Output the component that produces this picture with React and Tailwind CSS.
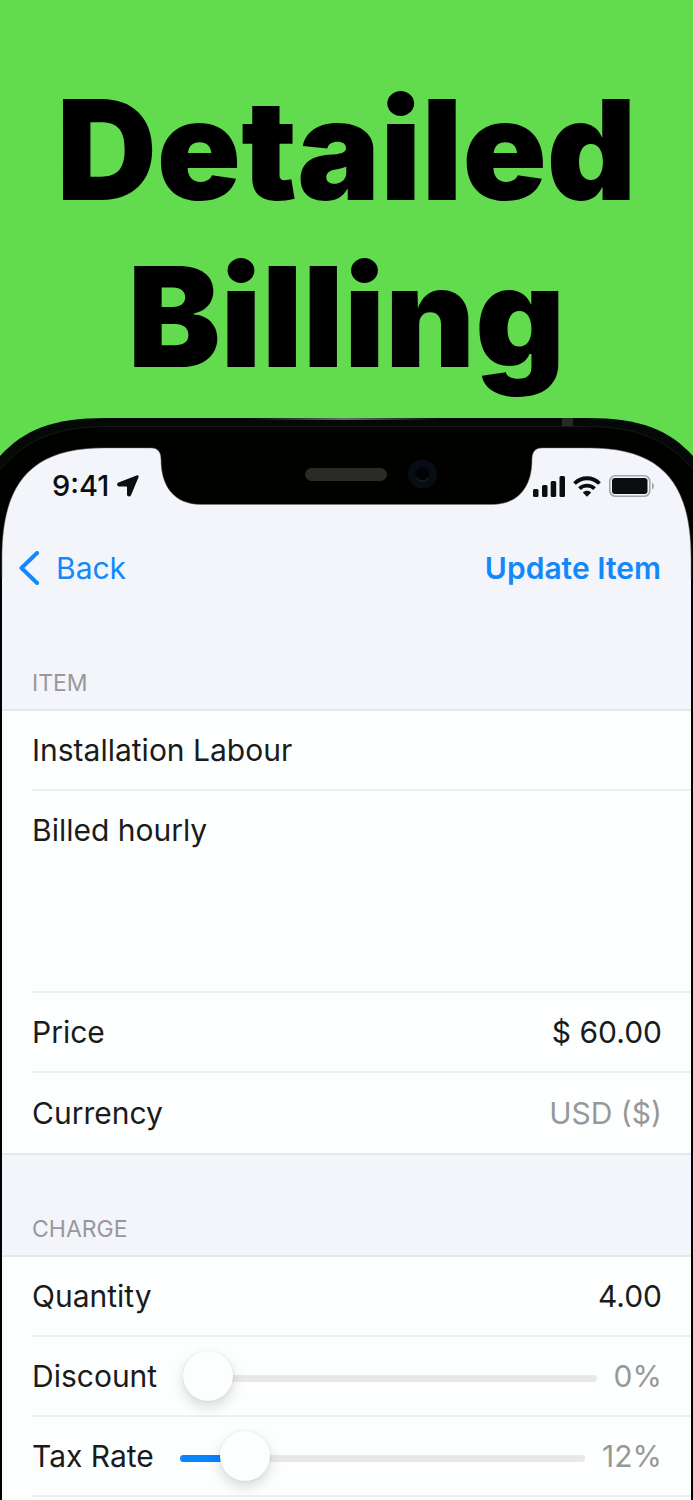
const fieldClass = 'min-w-0 bg-transparent p-0 outline-none';

function SectionHeader({ children }) {
  return <h2 className="px-[30px] pb-[10px] text-[23px] leading-8 text-[#98989c]">{children}</h2>;
}

function Row({ children, last = false }) {
  return (
    <div
      className={`ml-[30px] flex h-[80px] items-center pr-[29px] ${
        last ? '' : 'border-b-2 border-[#efeff1]'
      }`}
    >
      {children}
    </div>
  );
}

function PhoneTop() {
  return (
    <svg
      className="absolute inset-x-0 top-0 w-full"
      viewBox="0 0 693 160"
      fill="none"
      aria-hidden="true"
    >
      <path d="M0 160V38C24 12 52 0 106 0H587C641 0 669 12 693 38V160Z" fill="#040807" />
      <path d="M-2 170V54C24 22 56 8.500 106 8.500H587C637 8.500 669 22 695 54V170Z" fill="#010200" stroke="#151918" />
      <path d="M250 1H440" stroke="url(#shine)" strokeWidth="1.500" />
      <rect x="562" y="0" width="11" height="8" fill="#272927" />
      <path
        d="M2 170V140C2 64 32 30 104 30H151C158 30 161 34 161 42C161 68 174 86.500 201 86.500H492C519 86.500 532 68 532 42C532 34 535 30 542 30H589C661 30 691 64 691 140V170Z"
        fill="#f4f5fa"
        stroke="#777"
        strokeWidth="0.500"
      />
      <rect x="305" y="50" width="82" height="13" rx="6.500" fill="#2a2b29" />
      <circle cx="422.500" cy="56" r="14.500" fill="#080c15" />
      <circle cx="422.500" cy="56" r="7" fill="#020304" />
      <path d="M416.500 59.500A7 7 0 0 0 428.500 59.500" stroke="#1d232a" strokeWidth="1.200" />
      <defs>
        <linearGradient id="shine" x1="250" y1="0" x2="440" y2="0" gradientUnits="userSpaceOnUse">
          <stop stopColor="#040807" />
          <stop offset="0.500" stopColor="#8a8c8a" />
          <stop offset="1" stopColor="#040807" />
        </linearGradient>
      </defs>
    </svg>
  );
}

function StatusBar() {
  return (
    <div className="relative flex h-[38px] items-center justify-between pr-[38px] pl-[52px] text-[#0b0d0e]">
      <div className="flex items-center gap-2">
        <span className="text-[29px] leading-8 font-medium">9:41</span>
        <svg width="22" height="22" viewBox="0 0 22 22" fill="currentColor" aria-hidden="true">
          <path d="M19.500 0.400Q22.200 -0.200 21.500 2.200L14 20.200Q13 21.800 11.200 21.300Q10 20.900 10 19.400V12.200Q10 11.500 9.300 11.500H2Q0.200 11.400 0.100 9.600Q0 8.300 1.500 7.600Z" />
        </svg>
      </div>
      <div className="flex items-center gap-2">
        <svg width="33" height="21" viewBox="0 0 33 21" fill="currentColor" aria-hidden="true">
          <rect x="1" y="13" width="5.500" height="8" rx="1.500" />
          <rect x="10" y="9" width="5.500" height="12" rx="1.500" />
          <rect x="18.700" y="5" width="5.500" height="16" rx="1.500" />
          <rect x="27.500" y="0" width="5.500" height="21" rx="1.500" />
        </svg>
        <svg width="28" height="21" viewBox="0 0 28 21" fill="none" stroke="currentColor" aria-hidden="true">
          <path d="M1.500 7.500C8.500 0.500 19.500 0.500 26.500 7.500" strokeWidth="3.800" />
          <path d="M6.500 12.700C10.500 8.700 17.500 8.700 21.500 12.700" strokeWidth="3.800" />
          <path d="M9.800 16.400C12 14.200 16 14.200 18.200 16.400L14 20.700Z" fill="currentColor" stroke="none" />
        </svg>
        <svg width="46" height="22" viewBox="0 0 46 22" fill="none" aria-hidden="true">
          <rect x="0.800" y="0.800" width="40" height="20.400" rx="5.500" stroke="#a5a6aa" strokeWidth="1.600" />
          <rect x="3" y="3" width="35.500" height="16" rx="3" fill="#0b0d0e" />
          <path d="M43 7.500C45.500 8.500 45.500 13.500 43 14.500Z" fill="#a5a6aa" />
        </svg>
      </div>
    </div>
  );
}

function Slider({ id, value, max, fill }) {
  return (
    <div className="relative ml-[26px] flex h-[50px] flex-1 items-center">
      <div className="mt-1 h-[7px] w-full overflow-hidden rounded-full bg-[#e8e8eb]">
        <div className="h-full bg-[#0a84ff]" style={{ width: fill }} />
      </div>
      <input
        id={id}
        type="range"
        min="0"
        max={max}
        defaultValue={value}
        className="absolute inset-0 h-[50px] w-full appearance-none bg-transparent [&::-webkit-slider-thumb]:size-[50px] [&::-webkit-slider-thumb]:appearance-none [&::-webkit-slider-thumb]:rounded-full [&::-webkit-slider-thumb]:bg-[#fdfffe] [&::-webkit-slider-thumb]:shadow-[0_6px_14px_rgba(0,0,0,0.15),0_0_3px_rgba(0,0,0,0.08)]"
      />
    </div>
  );
}

export default function App() {
  return (
    <div className="min-h-screen overflow-hidden bg-[#63db4f] font-['Inter',sans-serif] text-[30px] leading-10 text-[#191b1c]">
      <h1 className="px-8 pt-[66px] pb-[18px] text-center text-[139px] leading-[167px] font-black text-black">
        Detailed Billing
      </h1>

      <main className="relative">
        <PhoneTop />
        <header className="relative h-[160px] pt-[49px]">
          <StatusBar />
          <nav className="flex items-center justify-between pt-[43px] pr-[32px] pl-[18px] text-[#1288fb]">
            <button type="button" className="flex items-center gap-4">
              <svg width="22" height="34" viewBox="0 0 22 34" fill="none" aria-hidden="true">
                <path d="M19 2L3.500 17L19 32" stroke="currentColor" strokeWidth="4" strokeLinecap="round" strokeLinejoin="round" />
              </svg>
              Back
            </button>
            <button type="button" className="font-semibold">Update Item</button>
          </nav>
        </header>

        <form className="border-x-2 border-black bg-[#f4f5fa]">
          <section className="pt-[89px]">
            <SectionHeader>ITEM</SectionHeader>
            <div className="border-y-2 border-[#e6e7eb] bg-[#fdfffe]">
              <Row>
                <input aria-label="Item name" defaultValue="Installation Labour" className={`${fieldClass} w-full`} />
              </Row>
              <div className="ml-[30px] border-b-2 border-[#efeff1] pt-[19px] pr-[29px]">
                <textarea
                  aria-label="Description"
                  defaultValue="Billed hourly"
                  className={`${fieldClass} block h-[181px] w-full resize-none`}
                />
              </div>
              <Row>
                <label htmlFor="price">Price</label>
                <input id="price" defaultValue="$ 60.00" className={`${fieldClass} flex-1 text-right`} />
              </Row>
              <Row last>
                <label htmlFor="currency">Currency</label>
                <select
                  id="currency"
                  className={`${fieldClass} ml-auto appearance-none text-right text-[#98989c]`}
                >
                  <option>USD ($)</option>
                </select>
              </Row>
            </div>
          </section>

          <section className="pt-[58px]">
            <SectionHeader>CHARGE</SectionHeader>
            <div className="border-t-2 border-[#e6e7eb] bg-[#fdfffe] pb-[3px]">
              <Row>
                <label htmlFor="quantity">Quantity</label>
                <input id="quantity" defaultValue="4.00" className={`${fieldClass} flex-1 text-right`} />
              </Row>
              <Row>
                <label htmlFor="discount">Discount</label>
                <Slider id="discount" value={0} max={100} fill="0%" />
                <output htmlFor="discount" className="ml-[17px] text-[#98989c]">0%</output>
              </Row>
              <Row>
                <label htmlFor="tax">Tax Rate</label>
                <Slider id="tax" value={12} max={105} fill="16%" />
                <output htmlFor="tax" className="ml-[17px] text-[#98989c]">12%</output>
              </Row>
            </div>
          </section>
        </form>
      </main>
    </div>
  );
}
